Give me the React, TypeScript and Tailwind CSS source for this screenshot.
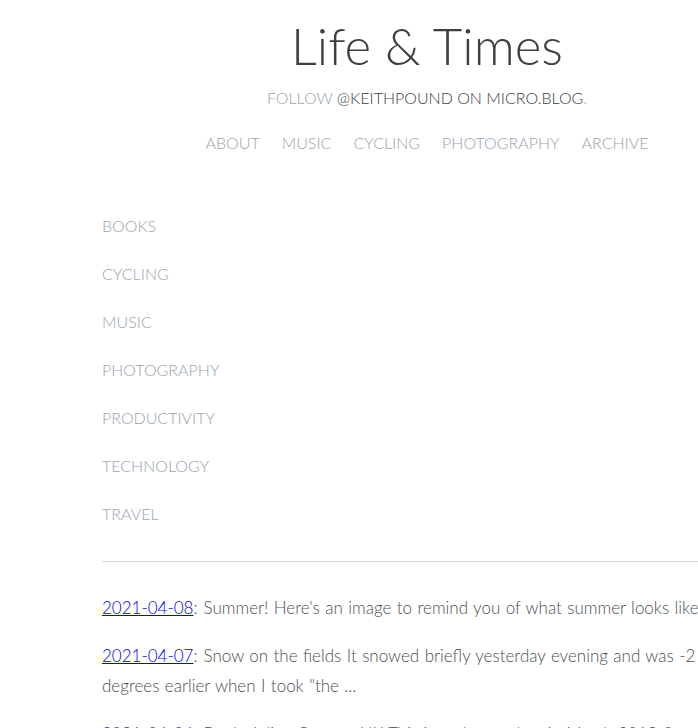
const nav = ['About', 'Music', 'Cycling', 'Photography', 'Archive']
const categories = ['Books', 'Cycling', 'Music', 'Photography', 'Productivity', 'Technology', 'Travel']

const posts = [
  { date: '2021-04-08', text: "Summer! Here's an image to remind you of what summer looks like ...", visited: false },
  { date: '2021-04-07', text: 'Snow on the fields It snowed briefly yesterday evening and was -2 degrees earlier when I took "the ...', visited: false },
  { date: '2021-04-04', text: 'Book: Julian Carter - UK This is a photo taken in March 2019 & ...', visited: true },
]

export default function App() {
  return (
    <div className="h-[728px] overflow-hidden bg-white font-['Lato',sans-serif] font-light">
      <div className="ml-[102px] w-[650px]">
        <header className="text-center">
          <h1 className="pt-[16px] text-[51px] font-light leading-[60px] text-[#3b4045]">Life &amp; Times</h1>
          <p className="mt-[12px] text-[16px] uppercase leading-5 text-[#3b4045]">
            <span className="text-[#98a4ad]">Follow </span>
            @keithpound on micro.blog<span className="text-[#98a4ad]">.</span>
          </p>
          <nav className="mt-[25px] flex justify-center gap-[22px] text-[16px] uppercase leading-5 text-[#98a4ad]">
            {nav.map((item) => (
              <a key={item} href="#">
                {item}
              </a>
            ))}
          </nav>
        </header>

        <ul className="mt-[63px] flex flex-col gap-[28px] text-[16px] uppercase leading-5 text-[#98a4ad]">
          {categories.map((c) => (
            <li key={c}>
              <a href="#">{c}</a>
            </li>
          ))}
        </ul>

        <hr className="mt-[37px] border-t border-[#d6d6d6]" />

        <div className="mt-[31px] flex flex-col gap-[18px] text-[17px] leading-[30px] text-[#4a4f54] [word-spacing:0.8px]">
          {posts.map((p) => (
            <p key={p.date}>
              <a href="#" className={p.visited ? 'text-[#551a8b] underline' : 'text-[#0000ee] underline'}>
                {p.date}
              </a>
              :<span className="pl-[6px]">{p.text}</span>
            </p>
          ))}
        </div>
      </div>
    </div>
  )
}
